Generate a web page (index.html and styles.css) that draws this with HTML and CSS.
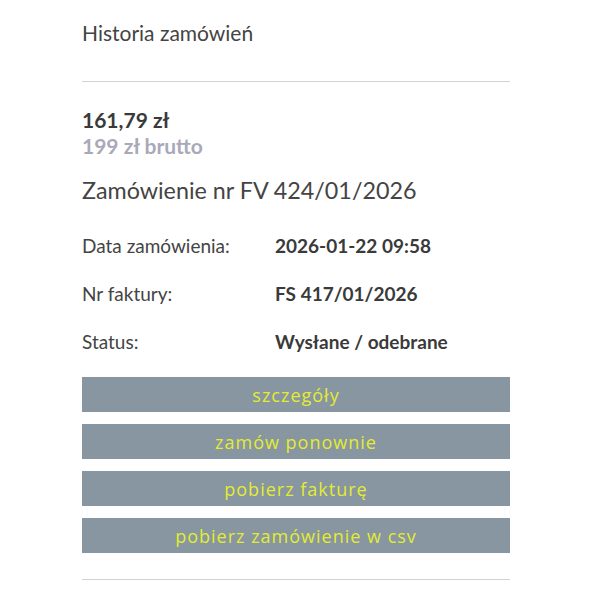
FILE: index.html
```html
<!DOCTYPE html>
<html lang="pl">
<head>
<meta charset="utf-8">
<title>Historia zamówień</title>
<link rel="stylesheet" href="styles.css">
</head>
<body>
<main class="page">
  <h1 class="title">Historia zamówień</h1>
  <hr class="divider">
  <section class="order">
    <div class="price">161,79 zł</div>
    <div class="price-gross">199 zł brutto</div>
    <h2 class="order-title">Zamówienie nr FV 424/01/2026</h2>
    <div class="details">
      <div class="row"><span class="label">Data zamówienia:</span><span class="value">2026-01-22 09:58</span></div>
      <div class="row"><span class="label">Nr faktury:</span><span class="value">FS 417/01/2026</span></div>
      <div class="row"><span class="label">Status:</span><span class="value">Wysłane / odebrane</span></div>
    </div>
    <div class="actions">
      <a class="btn" href="#">szczegóły</a>
      <a class="btn" href="#">zamów ponownie</a>
      <a class="btn" href="#">pobierz fakturę</a>
      <a class="btn" href="#">pobierz zamówienie w csv</a>
    </div>
  </section>
  <hr class="divider divider-bottom">
</main>
</body>
</html>
```
FILE: styles.css
```css
html, body {
  margin: 0;
  padding: 0;
  background: #ffffff;
}
body {
  font-family: "Lato", "Liberation Sans", sans-serif;
  color: #444444;
}
.page {
  width: 428px;
  margin-left: 82px;
  padding-top: 20px;
}
.title {
  margin: 0;
  font-size: 21px;
  line-height: 26px;
  font-weight: 400;
  color: #444444;
}
.divider {
  margin: 35px 0 0;
  border: 0;
  height: 1px;
  background: #d2d2d2;
}
.order {
  padding-top: 25px;
}
.price {
  font-size: 21px;
  line-height: 26px;
  font-weight: 700;
  color: #3a3a3a;
}
.price-gross {
  font-size: 21px;
  line-height: 26px;
  font-weight: 700;
  color: #a9a9b9;
}
.order-title {
  margin: 16px 0 0;
  font-size: 23.3px;
  line-height: 30px;
  font-weight: 400;
  color: #444444;
}
.details {
  margin-top: 16px;
}
.row {
  display: grid;
  grid-template-columns: 193px 1fr;
  align-items: center;
  height: 48px;
  font-size: 19px;
}
.label {
  color: #444444;
}
.value {
  font-weight: 700;
  color: #3a3a3a;
}
.actions {
  margin-top: 12px;
  display: flex;
  flex-direction: column;
  gap: 12px;
}
.btn {
  display: flex;
  align-items: center;
  justify-content: center;
  height: 35px;
  background: #8796a1;
  color: #e4ec30;
  text-decoration: none;
  font-family: "Open Sans", "Liberation Sans", sans-serif;
  font-size: 18px;
  letter-spacing: 1px;
}
.divider-bottom {
  margin-top: 26px;
}
```
